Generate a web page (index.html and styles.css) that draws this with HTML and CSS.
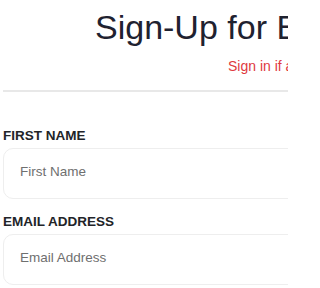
FILE: index.html
```html
<!DOCTYPE html>
<html lang="en">
<head>
<meta charset="utf-8">
<title>Sign-Up</title>
<link rel="stylesheet" href="styles.css">
</head>
<body>
<div class="page">
  <header class="header">
    <h1 class="title">Sign-Up for Blog</h1>
    <p class="subtitle">Sign in if already have an account</p>
  </header>
  <hr class="divider">
  <form class="form">
    <div class="field">
      <label class="label" for="first">FIRST NAME</label>
      <input class="input" id="first" type="text" placeholder="First Name">
    </div>
    <div class="field">
      <label class="label" for="email">EMAIL ADDRESS</label>
      <input class="input" id="email" type="email" placeholder="Email Address">
    </div>
  </form>
</div>
</body>
</html>
```
FILE: styles.css
```css
html, body {
  margin: 0;
  padding: 0;
  width: 288px;
  height: 288px;
  background: #ffffff;
  overflow: hidden;
}
body {
  font-family: "Liberation Sans", Arial, sans-serif;
}
.page {
  width: 288px;
  height: 288px;
  overflow: hidden;
}
.header {
  padding-top: 7px;
}
.title {
  margin: 0 0 0 95px;
  font-size: 34px;
  line-height: 40px;
  font-weight: 400;
  color: #1f2230;
  white-space: nowrap;
  overflow: hidden;
}
.subtitle {
  margin: 9px 0 0 228px;
  font-size: 14px;
  line-height: 20px;
  color: #e0393e;
  white-space: nowrap;
  overflow: hidden;
}
.divider {
  margin: 14px 0 0 3px;
  height: 0;
  border: 0;
  border-top: 2px solid #e8e8e8;
}
.form {
  display: flex;
  flex-direction: column;
  gap: 15px;
  padding: 36px 0 0 3px;
}
.field {
  display: flex;
  flex-direction: column;
  gap: 4px;
}
.label {
  font-size: 13.5px;
  line-height: 16px;
  font-weight: 700;
  color: #222428;
}
.input {
  box-sizing: border-box;
  width: 600px;
  height: 51px;
  margin: 0;
  padding: 0 16px 4px 16px;
  border: 1px solid #eeeeee;
  border-radius: 10px;
  font-family: "Liberation Sans", Arial, sans-serif;
  font-size: 13.5px;
  color: #333;
  background: #fff;
  outline: none;
}
.input::placeholder {
  color: #6f6f6f;
}
```
